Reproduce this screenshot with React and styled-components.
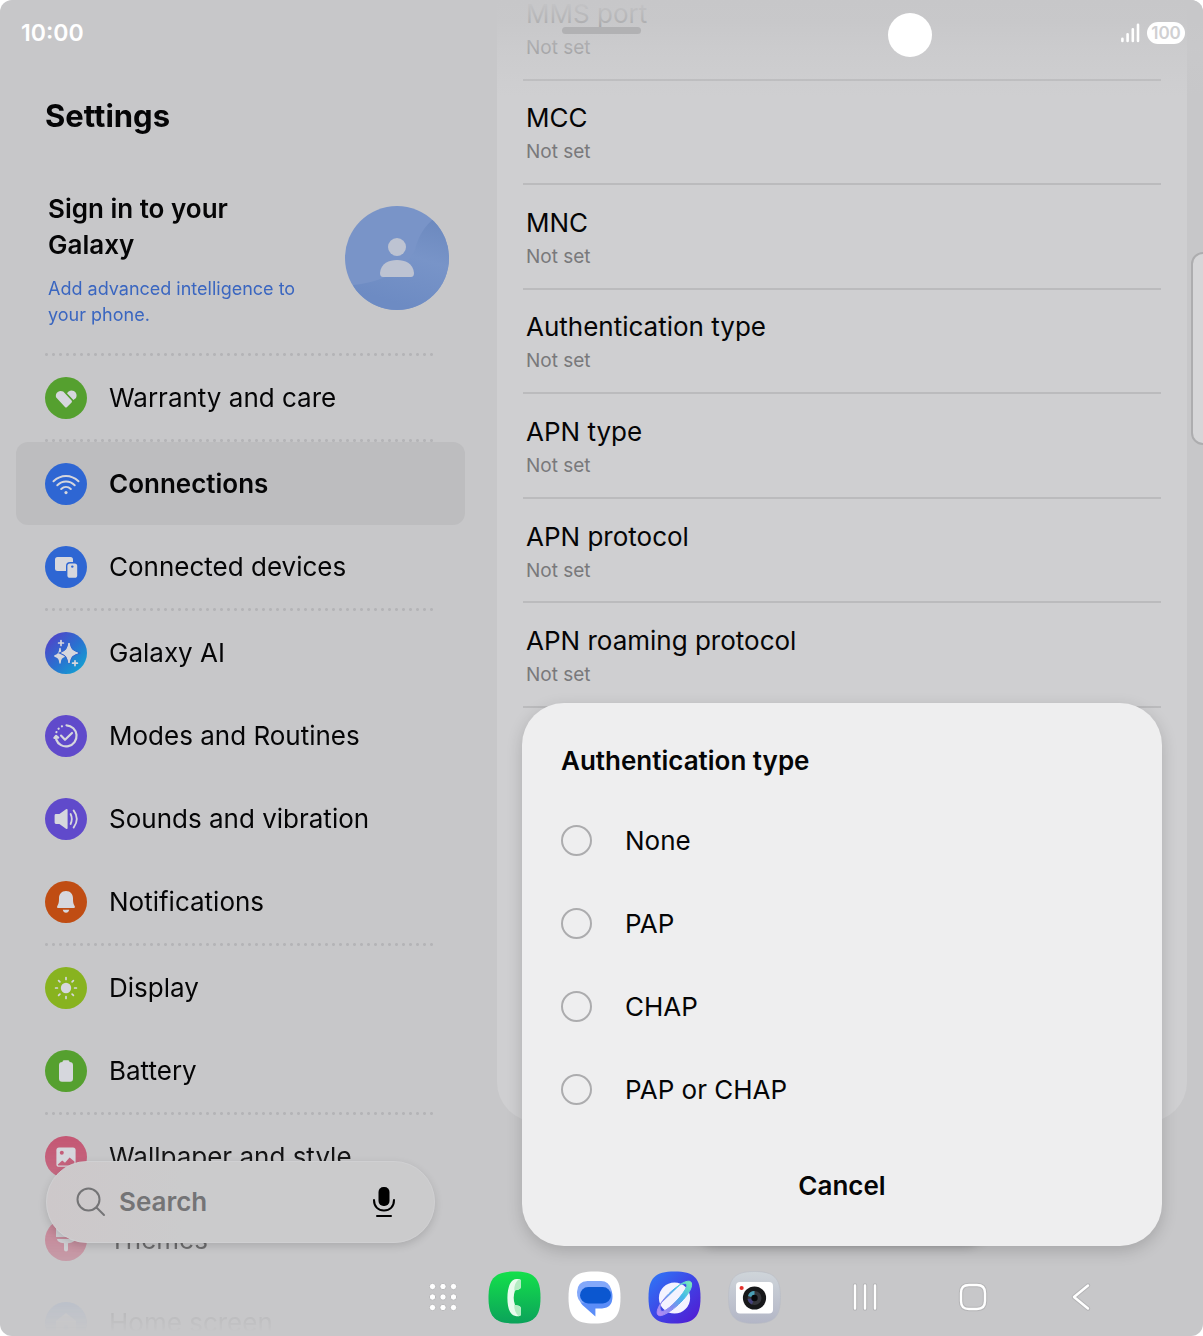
import { useState } from "react";
import styled, { createGlobalStyle, css } from "styled-components";

const apnFields = [
  "MMS port",
  "MCC",
  "MNC",
  "Authentication type",
  "APN type",
  "APN protocol",
  "APN roaming protocol",
];

const authOptions = ["None", "PAP", "CHAP", "PAP or CHAP"];

const glyph = "#d6d7dd";

const icons = {
  heart: (
    <>
      <path
        d="M20.2 30.2 L11 20.2 A5 5 0 0 1 18.2 14.6 L26.6 23.4 Q27.4 24.4 26.6 25.4 L21.8 30.2 Q21 31 20.2 30.2Z"
        fill={glyph}
      />
      <path
        d="M28.4 23 L22 16.2 A5.1 5.1 0 0 1 31 21 L28.4 23Z"
        fill={glyph}
      />
    </>
  ),
  wifi: (
    <g fill="none" stroke={glyph} strokeWidth="2" strokeLinecap="round">
      <path d="M8.5 18.2 C16 11.2 26 11.2 33.5 18.2" />
      <path d="M12.3 22.2 C17.4 17.3 24.6 17.3 29.7 22.2" />
      <path d="M16.2 26 C19 23.4 23 23.4 25.8 26" />
      <circle cx="21" cy="29.6" r="1.6" fill={glyph} stroke="none" />
    </g>
  ),
  devices: (
    <>
      <rect x="10" y="11" width="18" height="14" rx="2.5" fill={glyph} />
      <rect x="21" y="16" width="12.5" height="17" rx="4" fill="#2e66d3" />
      <rect x="22.4" y="17.4" width="9.8" height="14.4" rx="2.6" fill={glyph} />
      <circle cx="27.3" cy="20.6" r="1.2" fill="#2e66d3" />
    </>
  ),
  ai: (
    <>
      <path
        d="M15 16.4 C15.4 21 16.4 22.4 20 24 C16.4 25.4 15.4 26.6 15 31 C14.6 26.6 13.4 25.2 9.8 24 C13.4 22.4 14.6 21 15 16.4Z"
        fill={glyph}
        stroke={glyph}
        strokeWidth="1.4"
        strokeLinejoin="round"
      />
      <path
        d="M24 10.6 C25.4 17 26.8 18.8 33 21 C26.8 23 25.4 25 24 31.4 C22.6 25 21 23 15.6 21 C21 18.8 22.6 17 24 10.6Z"
        fill={glyph}
        stroke="#3563cd"
        strokeWidth="2"
        paintOrder="stroke"
      />
      <path
        d="M24 11 C25.4 17 26.8 18.8 32.6 21 C26.8 23 25.4 25 24 31 C22.6 25 21.6 23 17.4 21 C21.6 18.8 22.6 17 24 11Z"
        fill={glyph}
        stroke={glyph}
        strokeLinejoin="round"
      />
      <path
        d="M16 8.6 V13.4 M13.6 11 H18.4 M30 28.8 V33.6 M27.6 31.2 H32.4"
        stroke={glyph}
        strokeWidth="1.7"
        strokeLinecap="round"
      />
    </>
  ),
  modes: (
    <g
      fill="none"
      stroke={glyph}
      strokeWidth="2.2"
      strokeLinecap="round"
      strokeLinejoin="round"
    >
      <path d="M21.5 10.4 A10.5 10.5 0 1 1 11.2 24.5" />
      <path d="M11.4 17.2 A10.5 10.5 0 0 1 18.4 10.8" strokeDasharray="0.1 4" />
      <path d="M9.4 23 L11 20.8 L13.2 22.6Z" fill={glyph} />
      <path d="M16 20.6 L20 24.8 L27 18" />
    </g>
  ),
  sound: (
    <>
      <path
        d="M11 16 H14.4 L21 11.2 Q22.6 10.4 22.6 12 V30 Q22.6 31.6 21 30.8 L14.4 26 H11 Q9.6 26 9.6 24.6 V17.4 Q9.6 16 11 16Z"
        fill={glyph}
      />
      <path
        d="M25.6 16 Q28 21 25.6 26 M28.6 12.4 Q35 21 28.6 29.6"
        fill="none"
        stroke={glyph}
        strokeWidth="1.8"
        strokeLinecap="round"
      />
    </>
  ),
  bell: (
    <>
      <path
        d="M21 10 C25.6 10 28 13.4 28 17.2 C28 22 28.6 23.2 29.8 25.2 Q30.4 26.8 29 27 H13 Q11.4 26.8 12.2 25.2 C13.4 23.2 14 22 14 17.2 C14 13.4 16.4 10 21 10Z"
        fill={glyph}
      />
      <path d="M17.8 28.8 H24.2 Q23.6 31.8 21 31.8 Q18.4 31.8 17.8 28.8Z" fill={glyph} />
    </>
  ),
  sun: (
    <>
      <circle cx="21" cy="21" r="5.2" fill={glyph} />
      <path
        d="M21 10.6 V12.4 M21 29.6 V31.4 M10.6 21 H12.4 M29.6 21 H31.4 M13.6 13.6 L14.9 14.9 M27.1 27.1 L28.4 28.4 M13.6 28.4 L14.9 27.1 M27.1 14.9 L28.4 13.6"
        stroke={glyph}
        strokeWidth="1.7"
        strokeLinecap="round"
      />
    </>
  ),
  battery: (
    <path
      d="M18.8 10.2 H23.2 Q24.4 10.2 24.6 12 Q28 12 28 15 V28.6 Q28 31.8 25 31.8 H17 Q14 31.8 14 28.6 V15 Q14 12 17.4 12 Q17.6 10.2 18.8 10.2Z"
      fill={glyph}
    />
  ),
  picture: (
    <>
      <rect x="11.4" y="11.6" width="19.2" height="19.2" rx="2.6" fill={glyph} />
      <circle cx="16.8" cy="16.8" r="2" fill="#c45673" />
      <path
        d="M12.8 28.6 L17.2 24.6 L20 26.8 L24.6 21.6 L29.4 25.6 V28.2 Q29.4 29.4 28.2 29.4 H13.4 Q12.6 29.4 12.8 28.6Z"
        fill="#c45673"
      />
    </>
  ),
  brush: (
    <path
      d="M11 10 H31 V18 H11Z M12 20 H30 Q30 23.4 23 24.2 V30.4 Q23 32.4 21 32.4 Q19 32.4 19 30.4 V24.2 Q12 23.4 12 20Z"
      fill={glyph}
    />
  ),
  home: (
    <path
      d="M21 11 L31 19 V30 Q31 31 30 31 H12 Q11 31 11 30 V19Z M18.6 25.4 A2.4 2.4 0 1 0 23.4 25.4 A2.4 2.4 0 1 0 18.6 25.4Z"
      fill={glyph}
      fillRule="evenodd"
    />
  ),
};

const menuGroups = [
  [{ label: "Warranty and care", icon: "heart", color: "#55a02f" }],
  [
    { label: "Connections", icon: "wifi", color: "#2e66d3" },
    { label: "Connected devices", icon: "devices", color: "#2e66d3" },
  ],
  [
    {
      label: "Galaxy AI",
      icon: "ai",
      color: "linear-gradient(135deg, #4c49c9 15%, #2a70d0 52%, #149fd2 88%)",
    },
    { label: "Modes and Routines", icon: "modes", color: "#604acb" },
    { label: "Sounds and vibration", icon: "sound", color: "#604acb" },
    { label: "Notifications", icon: "bell", color: "#c04d13" },
  ],
  [
    { label: "Display", icon: "sun", color: "#88b31f" },
    { label: "Battery", icon: "battery", color: "#55a02f" },
  ],
  [
    { label: "Wallpaper and style", icon: "picture", color: "#c45673" },
    { label: "Themes", icon: "brush", color: "#c45673" },
    { label: "Home screen", icon: "home", color: "#5f8fd6" },
  ],
];

function Avatar() {
  return (
    <svg width="104" height="104" viewBox="0 0 104 104" aria-hidden="true">
      <defs>
        <clipPath id="avatarClip">
          <circle cx="52" cy="52" r="52" />
        </clipPath>
        <linearGradient id="avatarShade" x1="1" y1="0" x2="0.7" y2="1">
          <stop offset="0" stopColor="#6a87bd" />
          <stop offset="0.5" stopColor="#7894c8" />
          <stop offset="1" stopColor="#6d8bc3" />
        </linearGradient>
      </defs>
      <g clipPath="url(#avatarClip)">
        <rect width="104" height="104" fill="#7994c8" />
        <path
          d="M92 10 C78 20 72 34 70 44 C58 66 36 76 8 79 L20 104 H104 V10Z"
          fill="url(#avatarShade)"
        />
      </g>
      <circle cx="52" cy="41" r="9" fill="#bdc3d2" />
      <path
        d="M35 67 C36 57 44 54 52 54 C60 54 68 57 69 67 Q69 71 66 71 H38 Q35 71 35 67Z"
        fill="#bdc3d2"
      />
    </svg>
  );
}

function SearchIcon() {
  return (
    <svg width="30" height="30" viewBox="0 0 30 30" fill="none" stroke="#747476" strokeWidth="2" strokeLinecap="round">
      <circle cx="12.5" cy="12.5" r="11" />
      <path d="M20.5 20.5 L28 28" />
    </svg>
  );
}

function MicIcon() {
  return (
    <svg width="24" height="32" viewBox="0 0 24 32" fill="none" stroke="#000" strokeWidth="2" strokeLinecap="round">
      <rect x="6.5" y="1" width="11" height="19" rx="5" fill="#000" stroke="none" />
      <path d="M2 14 C2 21 6.5 24.5 12 24.5 C17.5 24.5 22 21 22 14" />
      <path d="M5 30 H19" />
    </svg>
  );
}

function SignalIcon() {
  return (
    <svg width="20" height="20" viewBox="0 0 20 20" stroke="#fff" strokeWidth="2.6" strokeLinecap="round">
      <path d="M2.4 15.8 V18 M7.6 11.2 V18 M12.8 6.2 V18 M18 1.8 V18" />
    </svg>
  );
}

function AppsIcon() {
  const dots = [3.5, 14, 24.5];
  return (
    <svg width="28" height="28" viewBox="0 0 28 28" fill="#fff" stroke="#b9b9bb">
      {dots.map((y) => dots.map((x) => <circle key={`${x}-${y}`} cx={x} cy={y} r="3.2" />))}
    </svg>
  );
}

const squircle =
  "M26.5 0.5 C46 0.5 52.5 7 52.5 26.5 C52.5 46 46 52.5 26.5 52.5 C7 52.5 0.5 46 0.5 26.5 C0.5 7 7 0.5 26.5 0.5Z";

function PhoneIcon() {
  return (
    <svg width="53" height="53" viewBox="0 0 53 53">
      <defs>
        <linearGradient id="phoneBg" x1="0" y1="0" x2="0" y2="1">
          <stop offset="0" stopColor="#14e04b" />
          <stop offset="1" stopColor="#0ba25a" />
        </linearGradient>
      </defs>
      <path d={squircle} fill="url(#phoneBg)" />
      <path
        d="M28.4 8 H31 Q33 8.2 33 10.4 V15.4 Q32.8 17.8 30.6 18.4 L27 19.4 Q24.4 27 27 34 L30.6 34.8 Q32.8 35.4 33 37.6 V43 Q32.8 45.2 30.6 45.2 H28.4 C22 45 19.4 37 19.4 27 C19.4 17 22 8.6 28.4 8Z"
        fill="#e9fbee"
      />
      <path
        d="M26.2 19.6 L30.6 18.4 Q32.8 17.8 33 15.4 V10.4 Q33 8.2 31 8 Q26 12 26.2 19.6Z M26.2 33.8 L30.6 34.8 Q32.8 35.4 33 37.6 V43 Q32.8 45.2 30.6 45.2 Q26 41 26.2 33.8Z"
        fill="#b4ecc4"
      />
    </svg>
  );
}

function MessagesIcon() {
  return (
    <svg width="53" height="53" viewBox="0 0 53 53">
      <path d={squircle} fill="#fff" />
      <path
        d="M21 13 H34 Q44.5 14 44.5 25.6 Q44.5 37 34 37.4 H27.4 V45.6 L14.4 34 Q11 30.6 12 25Z"
        fill="#5b8df8"
      />
      <path
        d="M19.6 10 H33 Q41 10 43.4 19 L40 24 L14 32 Q9 29 9 21 Q9.4 10.4 19.6 10Z"
        fill="#83a8fa"
      />
      <rect x="12" y="16" width="31" height="16.4" rx="8.2" fill="#0b57d0" />
    </svg>
  );
}

function InternetIcon() {
  return (
    <svg width="53" height="53" viewBox="0 0 53 53">
      <defs>
        <linearGradient id="netBg" x1="0" y1="0" x2="1" y2="1">
          <stop offset="0" stopColor="#2d7bf7" />
          <stop offset="0.5" stopColor="#3e45e6" />
          <stop offset="1" stopColor="#5416d0" />
        </linearGradient>
        <linearGradient id="netRing" x1="1" y1="0" x2="0" y2="1">
          <stop offset="0" stopColor="#7df0b4" />
          <stop offset="0.35" stopColor="#43b9e8" />
          <stop offset="0.65" stopColor="#7f8bf0" />
          <stop offset="1" stopColor="#b98cf4" />
        </linearGradient>
      </defs>
      <path d={squircle} fill="url(#netBg)" />
      <circle cx="26.5" cy="27" r="15.6" fill="#f4f3ff" />
      <path
        d="M13 32 C8 39 7.6 46 13.6 44.4 C24 42 44.6 22 43.6 13 C43.4 8.4 37 10 31.6 14 C24 19 17 26 13 32 C11.4 36 11.6 41 15 40.4 C22 38 36 23 38.6 15.6 C40 12 36 11.8 31.6 14Z"
        fill="url(#netRing)"
        fillRule="evenodd"
        stroke="url(#netRing)"
      />
    </svg>
  );
}

function CameraIcon() {
  return (
    <svg width="53" height="53" viewBox="0 0 53 53">
      <defs>
        <linearGradient id="camBg" x1="0" y1="0" x2="0" y2="1">
          <stop offset="0" stopColor="#cfd5da" />
          <stop offset="1" stopColor="#b3b6c6" />
        </linearGradient>
      </defs>
      <path d={squircle} fill="url(#camBg)" stroke="#b9bcc4" strokeWidth="0.6" />
      <rect x="8" y="11" width="37" height="31.5" rx="4" fill="#fff" />
      <circle cx="13.6" cy="17" r="2.1" fill="#e5322d" />
      <circle cx="26.5" cy="27" r="11.6" fill="#17181a" />
      <circle cx="26.5" cy="27" r="7" fill="#35363c" />
      <path d="M20 25 A7 7 0 0 1 26.5 20 V27Z" fill="#4a9fb5" />
      <path d="M19.6 28 A7 7 0 0 0 24 33.4 L26.5 27Z" fill="#44427a" />
      <circle cx="26.5" cy="27" r="3.2" fill="#08080a" />
    </svg>
  );
}

// white nav glyphs sit on a slightly darker outline
function NavIcon({ d }) {
  return (
    <svg width="32" height="32" viewBox="0 0 32 32" fill="none" strokeLinecap="round" strokeLinejoin="round">
      <path d={d} stroke="#b4b4b6" strokeWidth="4.4" />
      <path d={d} stroke="#fff" strokeWidth="2.4" />
    </svg>
  );
}

function App() {
  const [active, setActive] = useState("Connections");
  const [auth, setAuth] = useState("");

  return (
    <Screen>
      <GlobalStyle />
      <Sidebar>
        <SidebarScroll>
          <PageTitle>Settings</PageTitle>
          <Account href="#account">
            <div>
              <AccountTitle>Sign in to your Galaxy</AccountTitle>
              <AccountText>Add advanced intelligence to your phone.</AccountText>
            </div>
            <Avatar />
          </Account>
          <nav>
            {menuGroups.map((group, index) => (
              <MenuGroup key={index}>
                {group.map((item) => (
                  <li key={item.label}>
                    <MenuItem
                      type="button"
                      $active={active === item.label}
                      onClick={() => setActive(item.label)}
                    >
                      <MenuIcon $color={item.color}>
                        <svg viewBox="0 0 42 42" aria-hidden="true">
                          {icons[item.icon]}
                        </svg>
                      </MenuIcon>
                      {item.label}
                    </MenuItem>
                  </li>
                ))}
              </MenuGroup>
            ))}
          </nav>
        </SidebarScroll>
        <SearchBar>
          <SearchIcon />
          <SearchInput type="text" placeholder="Search" aria-label="Search" />
          <IconButton type="button" aria-label="Voice search">
            <MicIcon />
          </IconButton>
        </SearchBar>
      </Sidebar>

      <Detail>
        <Card>
          <FieldList>
            {apnFields.map((field) => (
              <Field key={field}>
                <FieldTitle>{field}</FieldTitle>
                <FieldValue>Not set</FieldValue>
              </Field>
            ))}
          </FieldList>
        </Card>
        <TopFade />
        <WindowHandle />
        <FloatingBar />
        <Dialog role="dialog" aria-labelledby="dialogTitle">
          <DialogTitle id="dialogTitle">Authentication type</DialogTitle>
          {authOptions.map((option) => (
            <Option key={option}>
              <Radio
                type="radio"
                name="auth"
                checked={auth === option}
                onChange={() => setAuth(option)}
              />
              {option}
            </Option>
          ))}
          <CancelButton type="button">Cancel</CancelButton>
        </Dialog>
        <EdgeHandle />
      </Detail>

      <StatusBar>
        <Clock>10:00</Clock>
        <StatusIcons>
          <SignalIcon />
          <BatteryLevel>100</BatteryLevel>
        </StatusIcons>
      </StatusBar>
      <CameraHole />

      <Taskbar>
        <TaskButton $width={62} type="button" aria-label="All apps">
          <AppsIcon />
        </TaskButton>
        <TaskButton $width={80} type="button" aria-label="Phone">
          <PhoneIcon />
        </TaskButton>
        <TaskButton $width={80} type="button" aria-label="Messages">
          <MessagesIcon />
        </TaskButton>
        <TaskButton $width={80} type="button" aria-label="Internet">
          <InternetIcon />
        </TaskButton>
        <TaskButton $width={80} type="button" aria-label="Camera">
          <CameraIcon />
        </TaskButton>
        <NavButtons>
          <TaskButton $width={108} type="button" aria-label="Recents">
            <NavIcon d="M6 4.5 V27.5 M16 4.5 V27.5 M26 4.5 V27.5" />
          </TaskButton>
          <TaskButton $width={108} type="button" aria-label="Home">
            <NavIcon d="M12 4 H20 Q28 4 28 12 V20 Q28 28 20 28 H12 Q4 28 4 20 V12 Q4 4 12 4Z" />
          </TaskButton>
          <TaskButton $width={108} type="button" aria-label="Back">
            <NavIcon d="M23 4.5 L9 16 L23 27.5" />
          </TaskButton>
        </NavButtons>
      </Taskbar>
    </Screen>
  );
}

const GlobalStyle = createGlobalStyle`
  * {
    box-sizing: border-box;
  }

  body {
    margin: 0;
    background: #fff;
    color: #050506;
    font-family: Inter, "Liberation Sans", sans-serif;
    font-size: 26px;
    line-height: 36px;
  }

  button, input {
    font: inherit;
    color: inherit;
  }

  svg {
    display: block;
    flex-shrink: 0;
  }
`;

const Screen = styled.div`
  position: relative;
  display: grid;
  grid-template-columns: minmax(0, 497fr) minmax(0, 706fr);
  height: 100vh;
  overflow: hidden;
  border-radius: 12px;
  background: #c7c7c9;
`;

const Sidebar = styled.aside`
  position: relative;
  min-height: 0;
`;

const SidebarScroll = styled.div`
  height: 100%;
  overflow: hidden;
  padding: 96px 32px 0 16px;
  mask-image: linear-gradient(
    to top,
    transparent 4px,
    rgba(0, 0, 0, 0.08) 28px,
    rgba(0, 0, 0, 0.5) 95px,
    rgba(0, 0, 0, 0.88) 170px,
    #000 200px
  );
`;

const PageTitle = styled.h1`
  margin: 0;
  padding-left: 29px;
  font-size: 31px;
  line-height: 40px;
  font-weight: 700;
`;

const Account = styled.a`
  display: flex;
  align-items: center;
  justify-content: space-between;
  padding: 52px 16px 25px 32px;
  color: inherit;
  text-decoration: none;

  > div {
    width: 264px;
  }
`;

const AccountTitle = styled.h2`
  margin: 0;
  max-width: 220px;
  padding-top: 3px;
  font-size: 26px;
  line-height: 36px;
  font-weight: 600;
`;

const AccountText = styled.p`
  margin: 13px 0 0;
  font-size: 18px;
  line-height: 26px;
  color: #3a66c0;
`;

const MenuGroup = styled.ul`
  margin: 0;
  padding: 0;
  list-style: none;

  &::before {
    content: "";
    display: block;
    height: 3px;
    margin: 0 28px 0 29px;
    background: radial-gradient(circle, #acacae 1px, transparent 2px) -2px 0 / 7px 3px;
    opacity: 0.7;
  }
`;

const MenuItem = styled.button`
  display: flex;
  align-items: center;
  gap: 22px;
  width: 100%;
  height: 83px;
  padding: 0 29px;
  border: 0;
  border-radius: 12px;
  background: none;
  text-align: left;

  ${(props) =>
    props.$active &&
    css`
      background: #bdbdbf;
      font-weight: 600;
    `}
`;

const MenuIcon = styled.span`
  width: 42px;
  height: 42px;
  border-radius: 50%;
  background: ${(props) => props.$color};
`;

const SearchBar = styled.div`
  position: absolute;
  left: 46px;
  right: 62px;
  bottom: 93px;
  display: flex;
  align-items: center;
  gap: 13px;
  height: 82px;
  padding: 0 38px 0 29px;
  border-radius: 41px;
  border: 1px solid #d0d0d2;
  background: linear-gradient(90deg, #cdc8ca, #cbcbcc 35%);
  box-shadow: 0 3px 8px rgba(0, 0, 0, 0.14);
`;

const SearchInput = styled.input`
  flex: 1;
  min-width: 0;
  padding: 0;
  border: 0;
  background: none;
  font-weight: 600;
  outline: none;

  &::placeholder {
    color: #747476;
    opacity: 1;
  }
`;

const IconButton = styled.button`
  padding: 0;
  border: 0;
  background: none;
`;

const Detail = styled.main`
  position: relative;
  min-height: 0;
  overflow: hidden;
  padding: 0 16px 214px 0;
`;

const Card = styled.section`
  height: 100%;
  overflow: hidden;
  padding: 0 26px;
  border-radius: 0 0 40px 40px;
  background: #cfcfd1;
`;

const FieldList = styled.div`
  display: grid;
  grid-auto-rows: 1fr;
  height: 732px;
  margin-top: -24px;
`;

const Field = styled.div`
  display: flex;
  flex-direction: column;
  justify-content: center;
  gap: 8px;
  padding: 7px 3px 0;
  border-bottom: 2px solid #bbbbbd;
`;

const FieldTitle = styled.div`
  line-height: 26px;
`;

const FieldValue = styled.div`
  font-size: 19px;
  line-height: 26px;
  color: #79797b;
`;

// scrolled rows dissolve under the status bar
const TopFade = styled.div`
  position: absolute;
  inset: 0 0 auto;
  height: 96px;
  background: linear-gradient(
    to bottom,
    rgba(199, 199, 201, 1) 0,
    rgba(199, 199, 201, 0.9) 20px,
    rgba(201, 201, 203, 0.6) 50px,
    rgba(207, 207, 209, 0) 96px
  );
`;

const WindowHandle = styled.div`
  position: absolute;
  top: 27px;
  left: 65px;
  width: 79px;
  height: 7px;
  border-radius: 4px;
  background: #b1b1b3;
`;

// only its shadow shows below the dialog
const FloatingBar = styled.div`
  position: absolute;
  left: 190px;
  right: 210px;
  bottom: 93px;
  height: 60px;
  border-radius: 30px;
  background: #c7c7c9;
  box-shadow: 0 4px 8px rgba(0, 0, 0, 0.22);
`;

const Dialog = styled.section`
  position: absolute;
  left: 25px;
  right: 41px;
  bottom: 90px;
  display: flex;
  flex-direction: column;
  padding: 40px 39px 42px;
  border-radius: 42px;
  background: #eeeeef;
  box-shadow: 0 5px 16px rgba(0, 0, 0, 0.17);
`;

const DialogTitle = styled.h2`
  margin: 0 0 20px;
  font-size: 26px;
  line-height: 36px;
  font-weight: 600;
`;

const Option = styled.label`
  display: flex;
  align-items: center;
  gap: 33px;
  height: 83px;
`;

const Radio = styled.input`
  appearance: none;
  width: 31px;
  height: 31px;
  margin: 0;
  border: 2px solid #acacae;
  border-radius: 50%;

  &:checked {
    border: 9px solid #2e66d3;
  }
`;

const CancelButton = styled.button`
  margin-top: 37px;
  padding: 0;
  border: 0;
  background: none;
  line-height: 36px;
  font-weight: 600;
`;

const EdgeHandle = styled.div`
  position: absolute;
  top: 252px;
  right: -12px;
  width: 24px;
  height: 193px;
  border: 2px solid #adadaf;
  border-radius: 12px;
  background: #d6d6d8;
`;

const StatusBar = styled.header`
  position: absolute;
  inset: 0 0 auto;
  display: flex;
  align-items: center;
  justify-content: space-between;
  height: 66px;
  padding: 0 18px 0 21px;
  color: #fff;
`;

const Clock = styled.time`
  font-size: 23px;
  font-weight: 600;
`;

const StatusIcons = styled.div`
  display: flex;
  align-items: center;
  gap: 7px;
`;

const BatteryLevel = styled.span`
  width: 38px;
  border-radius: 11px;
  background: #fff;
  color: #d0d0d2;
  font-size: 17px;
  line-height: 22px;
  font-weight: 600;
  text-align: center;
`;

const CameraHole = styled.div`
  position: absolute;
  top: 13px;
  right: 271px;
  width: 44px;
  height: 44px;
  border-radius: 50%;
  background: #fff;
`;

const Taskbar = styled.footer`
  position: absolute;
  inset: auto 0 0;
  display: flex;
  align-items: center;
  justify-content: flex-end;
  height: 78px;
  padding-right: 68px;
`;

const NavButtons = styled.div`
  display: flex;
  margin-left: 17px;
`;

const TaskButton = styled.button`
  display: flex;
  align-items: center;
  justify-content: center;
  width: ${(props) => props.$width}px;
  height: 78px;
  padding: 0;
  border: 0;
  background: none;
`;

export default App;
